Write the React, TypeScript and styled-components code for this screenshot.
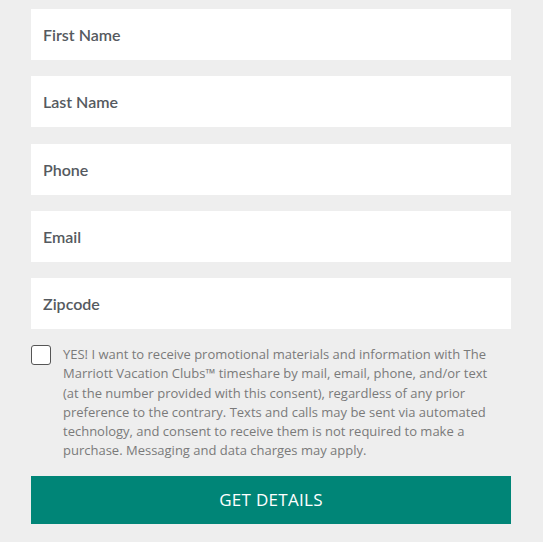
import React, { FC } from 'react';
import styled, { createGlobalStyle } from 'styled-components';

const GlobalStyle = createGlobalStyle`
  html, body {
    margin: 0;
    padding: 0;
    background: #eeeeee;
  }
`;

const fields = ['First Name', 'Last Name', 'Phone', 'Email', 'Zipcode'];

const App: FC = () => {
  return (
    <>
      <GlobalStyle />
      <Form onSubmit={e => e.preventDefault()}>
        {fields.map(name => (
          <Field key={name} type='text' placeholder={name} aria-label={name} />
        ))}

        <Consent>
          <Check type='checkbox' />
          <Disclaimer>
            YES! I want to receive promotional materials and information with The
            Marriott Vacation Clubs™ timeshare by mail, email, phone, and/or text
            (at the number provided with this consent), regardless of any prior
            preference to the contrary. Texts and calls may be sent via automated
            technology, and consent to receive them is not required to make a
            purchase. Messaging and data charges may apply.
          </Disclaimer>
        </Consent>

        <SubmitButton type='submit'>GET DETAILS</SubmitButton>
      </Form>
    </>
  );
};

export default App;

const Form = styled.form`
  width: 480px;
  margin-left: 31px;
  padding-top: 9px;
  display: flex;
  flex-direction: column;
  gap: 16.25px;
`;

const Field = styled.input`
  box-sizing: border-box;
  width: 100%;
  height: 51px;
  border: none;
  outline: none;
  background: #ffffff;
  padding: 0 12px;
  font-family: Lato, "Liberation Sans", sans-serif;
  font-size: 16px;
  font-weight: 600;
  color: #555;

  &::placeholder {
    color: #555a60;
    opacity: 1;
  }
`;

const Consent = styled.label`
  display: flex;
  align-items: flex-start;
  gap: 12px;
`;

const Check = styled.input`
  appearance: none;
  flex: none;
  box-sizing: border-box;
  width: 20px;
  height: 20px;
  margin: 0;
  border: 1px solid #555;
  border-radius: 3px;
  background: #fff;
`;

const Disclaimer = styled.p`
  margin: 0;
  width: 430px;
  font-family: "Open Sans", sans-serif;
  font-size: 13px;
  line-height: 19.2px;
  color: #7a7a7a;
`;

const SubmitButton = styled.button`
  height: 47.5px;
  margin-top: -0.5px;
  border: none;
  background: #008577;
  color: #ffffff;
  font-family: "Open Sans", sans-serif;
  font-size: 17px;
  letter-spacing: 0.3px;
  cursor: pointer;
`;
